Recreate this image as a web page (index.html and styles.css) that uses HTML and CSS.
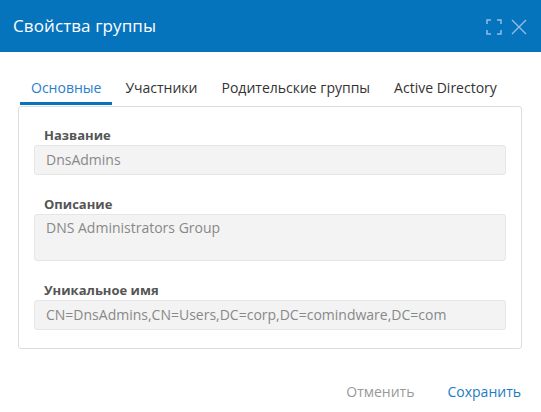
FILE: index.html
```html
<!DOCTYPE html>
<html lang="ru">
<head>
<meta charset="utf-8">
<title>Свойства группы</title>
<link rel="stylesheet" href="styles.css">
</head>
<body>
<div class="dialog">
  <header class="header">
    <h1 class="title">Свойства группы</h1>
    <div class="header-tools">
      <svg class="icon" width="16" height="16" viewBox="0 0 16 16">
        <path d="M1 5V1h4M11 1h4v4M15 11v4h-4M5 15H1v-4" fill="none" stroke="currentColor" stroke-width="1.5"/>
      </svg>
      <svg class="icon" width="16" height="16" viewBox="0 0 16 16">
        <path d="M1 1l14 14M15 1L1 15" fill="none" stroke="currentColor" stroke-width="1.4"/>
      </svg>
    </div>
  </header>
  <nav class="tabs">
    <span class="tab tab-active">Основные</span>
    <span class="tab">Участники</span>
    <span class="tab">Родительские группы</span>
    <span class="tab">Active Directory</span>
  </nav>
  <section class="panel">
    <div class="field">
      <div class="label">Название</div>
      <div class="input">DnsAdmins</div>
    </div>
    <div class="field">
      <div class="label">Описание</div>
      <div class="input input-area">DNS Administrators Group</div>
    </div>
    <div class="field">
      <div class="label">Уникальное имя</div>
      <div class="input">CN=DnsAdmins,CN=Users,DC=corp,DC=comindware,DC=com</div>
    </div>
  </section>
  <footer class="footer">
    <span class="btn btn-cancel">Отменить</span>
    <span class="btn btn-save">Сохранить</span>
  </footer>
</div>
</body>
</html>
```
FILE: styles.css
```css
html, body {
  margin: 0;
  padding: 0;
  background: #fff;
}
body {
  font-family: "Open Sans", "Noto Sans", sans-serif;
  color: #333;
}
.dialog {
  width: 541px;
  height: 412px;
  background: #fff;
}
.header {
  height: 52px;
  background: #0673bd;
  display: flex;
  align-items: center;
  justify-content: space-between;
  padding: 0 14px 0 13px;
  box-sizing: border-box;
}
.title {
  margin: 0;
  font-size: 17px;
  font-weight: 400;
  color: #fff;
  line-height: 24px;
  letter-spacing: 0.1px;
}
.header-tools {
  display: flex;
  align-items: center;
  gap: 9px;
  color: #8fbfe3;
  margin-top: 1px;
}
.icon {
  display: block;
}
.tabs {
  display: flex;
  gap: 2px;
  margin: 18px 0 0 20px;
}
.tab {
  font-size: 14px;
  line-height: 20px;
  padding: 8px 11px 4px;
  border-bottom: 3px solid transparent;
  color: #333;
}
.tab-active {
  color: #2a80c8;
  border-bottom-color: #0673bd;
}
.panel {
  margin: 1px 19px 0 18px;
  border: 1px solid #dcdcdc;
  border-radius: 3px;
  padding: 19px 15px 18px;
}
.field + .field {
  margin-top: 20px;
}
.label {
  font-size: 13px;
  font-weight: 700;
  line-height: 18px;
  color: #555;
  padding-left: 10px;
  margin-bottom: 1px;
}
.input {
  background: #f3f3f3;
  border: 1px solid #e6e6e6;
  border-radius: 3px;
  height: 28px;
  line-height: 28px;
  padding: 0 11px;
  font-size: 14px;
  color: #888;
  white-space: nowrap;
  overflow: hidden;
}
.input-area {
  line-height: 20px;
  padding-top: 3px;
  box-sizing: border-box;
  height: 47px;
}
.footer {
  display: flex;
  justify-content: flex-end;
  gap: 33px;
  padding: 33px 20px 0 0;
}
.btn {
  font-size: 14px;
  line-height: 20px;
}
.btn-cancel {
  color: #999;
}
.btn-save {
  color: #1a7cc6;
}
```
